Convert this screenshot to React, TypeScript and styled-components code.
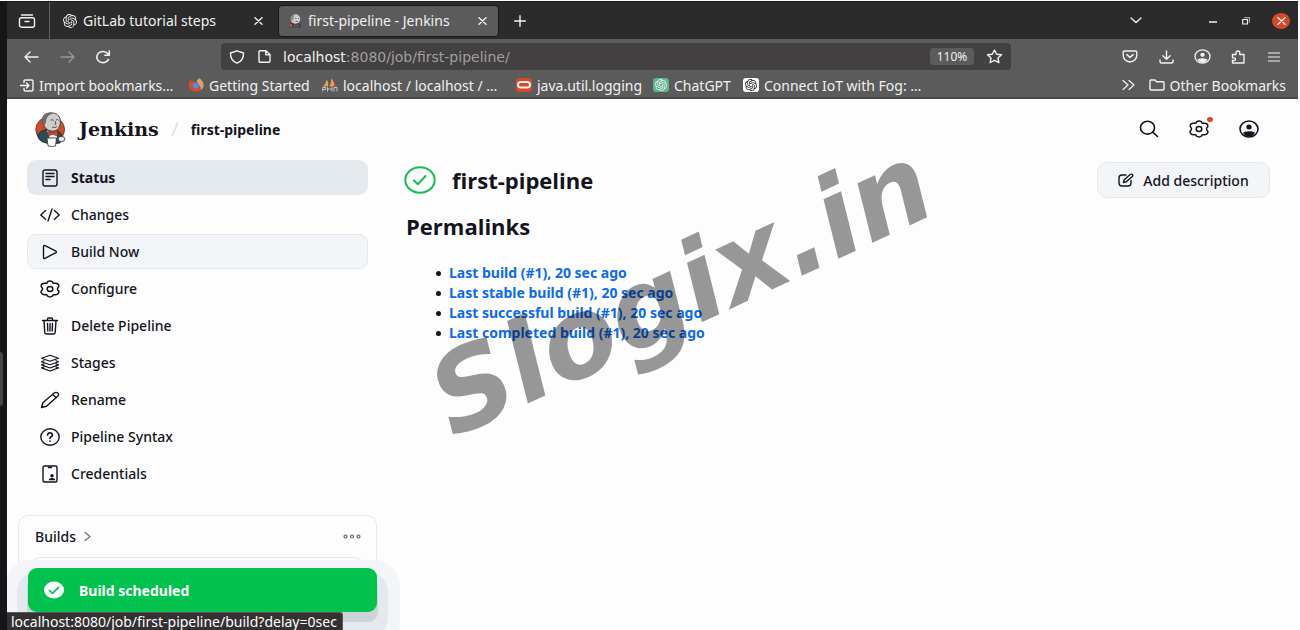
import React from "react";
import styled, { createGlobalStyle, css } from "styled-components";
import { SiOpenai } from "react-icons/si";

const Global = createGlobalStyle`
  * { box-sizing: border-box; }
  html, body { margin: 0; padding: 0; background: #fdfdfd; }
  body { font-family: "Noto Sans", "Open Sans", sans-serif; font-size: 14px; color: #14141f; overflow: hidden; }
  button, input { font: inherit; color: inherit; background: none; border: 0; padding: 0; margin: 0; }
  ul { list-style: none; margin: 0; padding: 0; }
  a { color: inherit; text-decoration: none; }
  svg { display: block; flex: none; }
`;

const Desktop = styled.div`
  display: flex;
  height: 100vh;
  padding: 1px 2px 0 0;
`;
const Dock = styled.div`
  width: 7px;
  flex: none;
  display: flex;
  align-items: center;
  background: #16151a;
`;
const DockHandle = styled.div`
  width: 3px;
  height: 54px;
  margin-top: 126px;
  border-radius: 0 3px 3px 0;
  background: #474649;
`;
const Window = styled.div`
  position: relative;
  flex: 1;
  min-width: 0;
  display: flex;
  flex-direction: column;
  overflow: hidden;
`;

const TabStrip = styled.header`
  display: flex;
  align-items: center;
  height: 38px;
  flex: none;
  background: #2b2b2b;
  border-top: 1px solid #1a1c1e;
  color: #f1f1f1;
`;
const ViewButton = styled.button`
  width: 43px;
  height: 100%;
  padding-right: 3px;
  display: grid;
  place-items: center;
  border-right: 1px solid #626262;
`;
const Tab = styled.div<{ $active?: boolean }>`
  display: flex;
  align-items: center;
  gap: 6px;
  height: 32px;
  width: ${(p) => (p.$active ? 221 : 228)}px;
  padding: 0 9px 0 ${(p) => (p.$active ? 9 : 13)}px;
  border-radius: 4px;
  ${(p) => p.$active && css`background: #5b5b5b; border: 1px solid #161719;`}
`;
const TabTitle = styled.span`
  flex: 1;
  white-space: nowrap;
`;
const IconButton = styled.button<{ $w?: number }>`
  width: ${(p) => p.$w ?? 36}px;
  height: 28px;
  flex: none;
  display: grid;
  place-items: center;
`;
const Spacer = styled.div`
  flex: 1;
`;
const CloseWindow = styled.button`
  width: 18px;
  height: 16px;
  margin: 0 8px 0 17px;
  border-radius: 50%;
  background: #d6482a;
  display: grid;
  place-items: center;
`;

const NavBar = styled.div`
  display: flex;
  align-items: center;
  height: 35px;
  flex: none;
  background: #5b5b5b;
  color: #f1f1f1;
`;
const NavLeft = styled.div`
  display: flex;
  width: 214px;
  padding-left: 6px;
  flex: none;
`;
const NavRight = styled.div`
  display: flex;
  justify-content: flex-end;
  width: 287px;
  padding-right: 6px;
  flex: none;
`;
const UrlBar = styled.div`
  flex: 1;
  min-width: 0;
  height: 27px;
  display: flex;
  align-items: center;
  padding: 0 8px;
  border-radius: 4px;
  background: #424040;
  font-family: "DejaVu Sans", sans-serif;
`;
const UrlHost = styled.label``;
const UrlPath = styled.input`
  flex: 1;
  min-width: 0;
  color: #a09f9f;
  outline: none;
`;
const Zoom = styled.button`
  width: 44px;
  height: 17px;
  margin-right: 11px;
  border-radius: 3px;
  background: #5b5b5b;
  font: 12px/17px "Noto Sans", sans-serif;
`;

const Bookmarks = styled.nav`
  display: flex;
  align-items: center;
  height: 25px;
  flex: none;
  padding: 0 12px 1px 13px;
  background: #5b5b5b;
  border-bottom: 2px solid #464646;
  color: #f1f1f1;
`;
const Bookmark = styled.a<{ $w?: number }>`
  display: flex;
  align-items: center;
  gap: 5px;
  width: ${(p) => (p.$w ? p.$w + "px" : "auto")};
  white-space: nowrap;
`;
const Favicon = styled.span<{ $bg: string }>`
  width: 16px;
  height: 14px;
  flex: none;
  border-radius: 3px;
  display: grid;
  place-items: center;
  background: ${(p) => p.$bg};
`;

const PageHeader = styled.header`
  display: flex;
  align-items: center;
  height: 60px;
  flex: none;
  padding: 0 24px 0 28px;
`;
const Brand = styled.a`
  display: flex;
  align-items: center;
  gap: 13px;
  font: bold 19px/24px "DejaVu Serif", serif;
`;
const Slash = styled.span`
  width: 32px;
  display: grid;
  place-items: center;
`;
const Crumb = styled.a`
  font-weight: 700;
`;
const HeaderAction = styled(IconButton)`
  position: relative;
  width: 50px;
`;
const Dot = styled.span`
  position: absolute;
  top: 2px;
  right: 11px;
  width: 6px;
  height: 5px;
  border-radius: 50%;
  background: #d6482a;
`;

const Body = styled.div`
  flex: 1;
  min-height: 0;
  display: flex;
`;
const Sidebar = styled.aside`
  width: 370px;
  flex: none;
  display: flex;
  flex-direction: column;
`;
const TaskList = styled.ul`
  display: flex;
  flex-direction: column;
  gap: 2px;
  padding: 1px 9px 0 20px;
`;
const Task = styled.a<{ $state?: "current" | "hover" }>`
  display: flex;
  align-items: center;
  gap: 11px;
  height: 35px;
  padding-left: 12px;
  border: 1px solid transparent;
  border-radius: 9px;
  font-weight: 500;
  ${(p) => p.$state === "current" && css`background: #e4e9ed; font-weight: 700;`}
  ${(p) => p.$state === "hover" && css`background: #f3f5f9; border-color: #e1e7ec;`}
`;
const BuildsCard = styled.section`
  flex: 1;
  display: flex;
  flex-direction: column;
  margin: 24px 0 0 11px;
  padding: 0 12px 0 11px;
  border: 1px solid #e4e9ed;
  border-bottom: 0;
  border-radius: 10px 10px 0 0;
`;
const BuildsHead = styled.div`
  display: flex;
  align-items: center;
  justify-content: space-between;
  height: 41px;
  padding: 0 4px 0 5px;
`;
const BuildsLink = styled.a`
  display: flex;
  align-items: center;
  gap: 8px;
  font-weight: 500;
`;
const BuildsInner = styled.div`
  flex: 1;
  border: 1px solid #e1e7ec;
  border-bottom: 0;
  border-radius: 10px 10px 0 0;
`;

const Main = styled.main`
  flex: 1;
  min-width: 0;
  padding: 3px 28px 0 27px;
`;
const TitleRow = styled.div`
  display: flex;
  align-items: center;
  justify-content: space-between;
`;
const Title = styled.h1`
  display: flex;
  align-items: center;
  gap: 16px;
  margin: 0;
  font: 700 22px/36px "Open Sans", sans-serif;
`;
const DescButton = styled.button`
  display: flex;
  align-items: center;
  justify-content: center;
  gap: 9px;
  width: 173px;
  height: 36px;
  border: 1px solid #e4e9ed;
  border-radius: 10px;
  background: #f3f5f9;
  font-weight: 500;
`;
const Subtitle = styled.h2`
  margin: 11px 0 0 2px;
  font: 700 22px/34px "Open Sans", sans-serif;
`;
const Links = styled.ul`
  margin-top: 20px;
  padding-left: 32px;
`;
const LinkItem = styled.li`
  display: flex;
  align-items: center;
  gap: 8px;
  line-height: 20px;
  font-weight: 700;
  color: #0b6aef;
  &::before {
    content: "";
    width: 5px;
    height: 5px;
    border-radius: 50%;
    background: #14141f;
  }
`;

const Watermark = styled.div`
  position: absolute;
  left: 457px;
  top: 333px;
  font: italic bold 110px/128px "DejaVu Sans", sans-serif;
  color: #000;
  opacity: 0.4;
  transform: rotate(-25deg);
  transform-origin: 0 100%;
  white-space: nowrap;
  pointer-events: none;
`;
const Toast = styled.div`
  position: absolute;
  left: 21px;
  bottom: 18px;
  width: 349px;
  height: 44px;
  display: flex;
  align-items: center;
  gap: 15px;
  padding-left: 16px;
  border-radius: 9px;
  background: #00c24d;
  color: #fff;
  font-weight: 700;
  box-shadow: 0 9px 0 1px #cdd4d8, 0 15px 0 11px #e4e9ed, 0 15px 0 23px #f3f5f9;
`;
const StatusBubble = styled.div`
  position: absolute;
  left: 0;
  bottom: 0;
  height: 18px;
  padding: 0 5px 0 4px;
  border: 1px solid #5a5a5a;
  border-width: 1px 1px 0 0;
  border-radius: 0 3px 0 0;
  background: #333132;
  color: #fff;
  line-height: 17px;
  white-space: nowrap;
`;

type IconProps = {
  w?: number;
  h?: number;
  box?: string;
  sw?: number;
  color?: string;
  children: React.ReactNode;
};
const Icon = ({ w = 20, h = 18, box = "0 0 20 18", sw = 1.4, color = "currentColor", children }: IconProps) => (
  <svg width={w} height={h} viewBox={box} fill="none" stroke={color} strokeWidth={sw} strokeLinecap="round" strokeLinejoin="round" aria-hidden="true">
    {children}
  </svg>
);
const CloseIcon = () => (
  <Icon w={9} h={8} box="0 0 9 8"><path d="M1 .7l7 6.6M8 .7L1 7.3" /></Icon>
);
const GearIcon = () => (
  <Icon w={20} h={18} sw={1.5}>
    <path d="M7.6 1.7Q10 .3 12.4 1.7L13.1 3.3L15.3 3.2Q18.2 3 18.8 5.4Q19.2 6.6 17.6 8L17.6 9.9Q19.4 11.4 18.8 12.6Q18 15 15.3 14.7L13.1 14.7L12.4 16.2Q10 17.6 7.6 16.2L6.9 14.7L4.7 14.7Q2 15 1.2 12.6Q.6 11.4 2.4 9.9L2.4 8Q.8 6.6 1.2 5.4Q1.8 3 4.7 3.2L6.9 3.3Z" />
    <ellipse cx="10" cy="9" rx="2.8" ry="2.5" />
  </Icon>
);
const UserIcon = ({ w = 20, h = 18 }: { w?: number; h?: number }) => (
  <Icon w={w} h={h} sw={1.6}>
    <ellipse cx="10" cy="9" rx="9" ry="8" />
    <ellipse cx="10" cy="7" rx="2.7" ry="2.5" fill="currentColor" stroke="none" />
    <path d="M4 12.4Q10 10 16 12.4Q14 16.5 10 16.5Q6 16.5 4 12.4Z" fill="currentColor" stroke="none" />
  </Icon>
);

const JenkinsLogo = ({ w = 31, h = 35 }: { w?: number; h?: number }) => (
  <svg width={w} height={h} viewBox="0 0 31 35" aria-hidden="true">
    <ellipse cx="15.2" cy="17.5" rx="14.4" ry="13" fill="#d24a2c" stroke="#5a2a20" strokeWidth=".8" />
    <path d="M7.5 9Q7 1.500 15 .8Q23 .4 25 6.500Q26.500 12 23.500 16.500Q20 20.500 14 18.500Q8.500 16 7.500 9Z" fill="#cfcecb" stroke="#2b2b2b" strokeWidth=".8" />
    <path d="M7.600 10.500Q5.500 3.500 12 1.300Q16 .2 18 1Q12 3.500 11.300 8Q11 12 9.500 13.500Q8 12.500 7.600 10.500Z" fill="#6d6d6d" />
    <path d="M15.500 8.200q2-1 3.300.2M21 8q1.500-.8 2.600.2M20 9l1 3-1.500.3M17 15q3 1.300 5-.4" stroke="#444" strokeWidth=".9" fill="none" />
    <path d="M2.500 23Q5 18.500 11 17.500L17 22L23 19Q27 21 27.500 26L25 31Q14 33 6.500 29.500Q3 27 2.500 23Z" fill="#2f4a50" stroke="#1d2426" strokeWidth=".8" />
    <path d="M12 18l5 4 4.500-3 .5 7-7 1z" fill="#efefef" />
    <path d="M13.500 19.500l4 1.800 5-2.500v5.200l-5-1.800-4 1.800z" fill="#d24a2c" stroke="#5e1c10" strokeWidth=".5" />
    <path d="M12 26h9.500l-1 8q-4 1-7.400 0z" fill="#fff" stroke="#333" strokeWidth=".8" />
    <ellipse cx="26.500" cy="27" rx="3.400" ry="2.600" fill="#eee" stroke="#333" strokeWidth=".8" />
  </svg>
);
const JenkinsFavicon = () => (
  <svg width="14" height="14" viewBox="0 0 14 14" aria-hidden="true">
    <path d="M1 10l2.500-1.500h7L13 10v3.500H1z" fill="#2f4a50" />
    <path d="M1 10.500l3-.5v3H2z" fill="#d24a2c" />
    <ellipse cx="7.500" cy="5" rx="4.800" ry="4.700" fill="#cfcfcf" />
    <path d="M3 6Q2.500 1.500 7 .4 5.500 3 5 7z" fill="#8b8b8b" />
    <path d="M7 4.500h1.500M10 4.500h1M7.500 7.500h2.500" stroke="#555" strokeWidth=".8" />
    <path d="M6 10.500l2 1 2-1v2l-2-.8-2 .8z" fill="#d24a2c" />
  </svg>
);

const tasks: { label: string; state?: "current" | "hover"; icon: React.ReactNode }[] = [
  { label: "Status", state: "current", icon: <Icon><rect x="3" y="1" width="14" height="16" rx="2" /><path d="M6 4.5h8M6 7.5h8M6 10.5h4" /></Icon> },
  { label: "Changes", icon: <Icon><path d="M5.5 4.5L.8 9l4.7 4.2M14.5 4.5L19.2 9l-4.7 4.2M12 3L8 15" /></Icon> },
  { label: "Build Now", state: "hover", icon: <Icon><path d="M3.5 3.6Q3.5 2 5 2.6L16 8.2Q17 9 16 9.6L5 15.3Q3.5 15.8 3.5 14.4Z" /></Icon> },
  { label: "Configure", icon: <GearIcon /> },
  { label: "Delete Pipeline", icon: <Icon><path d="M2.5 3.5h15M7.5 3.2V2q0-1 1-1h3q1 0 1 1v1.2M4 3.8l.8 11.6q.2 1.6 1.8 1.6h6.8q1.6 0 1.8-1.6L16 3.8M7.5 6.5l.3 7.5M10 6.5V14M12.5 6.5l-.3 7.5" /></Icon> },
  { label: "Stages", icon: <Icon><path d="M10 1.2l8.500 3L10 7.200 1.500 4.200zM4 6.700L1.500 7.700 10 10.800l8.500-3.100-2.500-1M4 9.900L1.500 10.900 10 14l8.500-3.100-2.500-1M4 13L1.500 13.900 10 17l8.500-3.100L16 13" strokeWidth="1.200" /></Icon> },
  { label: "Rename", icon: <Icon><path d="M1.500 16.500l1.300-4.700L14.500 1.800q1.600-1 3.200.2 1.600 1.400.2 3L6.500 15.300zM12.700 3.500l3.500 3.200" /></Icon> },
  { label: "Pipeline Syntax", icon: <Icon><ellipse cx="10" cy="9" rx="9.200" ry="8.200" /><path d="M7.600 7q.2-2.200 2.400-2.200T12.400 7q0 1.200-1.200 1.800T10 10.300M10 13v.1" strokeWidth="1.700" /></Icon> },
  { label: "Credentials", icon: <Icon><rect x="3" y="1" width="14" height="16" rx="1.500" /><path d="M8.500 2.500h3" /><circle cx="12" cy="10.800" r="1.700" fill="currentColor" stroke="none" /><path d="M8.700 15.200q.3-2.300 3.300-2.300t3.300 2.300z" fill="currentColor" stroke="none" /></Icon> },
];

const permalinks = [
  "Last build (#1), 20 sec ago",
  "Last stable build (#1), 20 sec ago",
  "Last successful build (#1), 20 sec ago",
  "Last completed build (#1), 20 sec ago",
];

export default function App() {
  return (
    <Desktop>
      <Global />
      <Dock><DockHandle /></Dock>
      <Window>
        <TabStrip>
          <ViewButton aria-label="Firefox View">
            <Icon w={18} h={14} box="0 0 18 14"><path d="M3.500 1h11" /><rect x="1.500" y="3.800" width="15" height="9.400" rx="2" /><path d="M7 7.500h4" /></Icon>
          </ViewButton>
          <Tab>
            <SiOpenai size={14} />
            <TabTitle>GitLab tutorial steps</TabTitle>
            <IconButton $w={22} aria-label="Close tab"><CloseIcon /></IconButton>
          </Tab>
          <Tab $active>
            <JenkinsFavicon />
            <TabTitle>first-pipeline - Jenkins</TabTitle>
            <IconButton $w={14} aria-label="Close tab"><CloseIcon /></IconButton>
          </Tab>
          <IconButton $w={42} aria-label="New tab"><Icon w={12} h={12} box="0 0 12 12"><path d="M6 .7v10.600M.7 6h10.600" /></Icon></IconButton>
          <Spacer />
          <IconButton $w={106} aria-label="List all tabs"><Icon w={12} h={7} box="0 0 12 7"><path d="M1 1l5 4.500L11 1" /></Icon></IconButton>
          <IconButton $w={48} aria-label="Minimize"><Icon w={8} h={5} box="0 0 8 5"><path d="M0 4h8" /></Icon></IconButton>
          <IconButton $w={18} aria-label="Restore"><Icon w={8} h={8} box="0 0 8 8" sw={1.200}><rect x=".7" y="2.500" width="4.800" height="4.500" /><path d="M2.500.7h5v4.500" opacity=".6" /></Icon></IconButton>
          <CloseWindow aria-label="Close window"><CloseIcon /></CloseWindow>
        </TabStrip>

        <NavBar>
          <NavLeft>
            <IconButton aria-label="Back"><Icon w={15} h={12} box="0 0 15 12"><path d="M14 6H1M6 1L1 6l5 5" /></Icon></IconButton>
            <IconButton aria-label="Forward"><Icon w={15} h={12} box="0 0 15 12" color="#979797"><path d="M1 6h13M9 1l5 5-5 5" /></Icon></IconButton>
            <IconButton aria-label="Reload"><Icon w={16} h={14} box="0 0 16 14" sw={1.600}><path d="M13.500 9.500A6.200 5.600 0 1 1 12.800 3.600L14 5M14.300 1v4.200H9.800" /></Icon></IconButton>
          </NavLeft>
          <UrlBar>
            <IconButton $w={16} aria-label="Tracking protection"><Icon w={16} h={14} box="0 0 16 14"><path d="M8 .8l6.500 2.200q.3 7.500-6.500 10.200Q1.200 10.500 1.500 3z" /></Icon></IconButton>
            <IconButton $w={38} aria-label="Site information"><Icon w={13} h={13} box="0 0 13 13"><path d="M1 2q0-1.200 1.200-1.200H8L12 4.500V11q0 1.200-1.200 1.200H2.200Q1 12.200 1 11zM7.800 1v3.700H12" /></Icon></IconButton>
            <UrlHost htmlFor="address">localhost</UrlHost>
            <UrlPath id="address" defaultValue=":8080/job/first-pipeline/" />
            <Zoom>110%</Zoom>
            <IconButton $w={18} aria-label="Bookmark this page"><Icon w={17} h={15} box="0 0 17 15"><path d="M8.500 1l2.200 4.200 4.800.6-3.500 3.200.9 4.600-4.400-2.200-4.400 2.200.9-4.600L1.500 5.800l4.800-.6z" /></Icon></IconButton>
          </UrlBar>
          <NavRight>
            <IconButton aria-label="Pocket"><Icon w={16} h={13} box="0 0 16 13"><path d="M2.500 1h11q1.300 0 1.300 1.200V5q0 6-6.800 7Q1.200 11 1.200 5V2.200Q1.200 1 2.500 1zM4.800 4.600L8 7.400l3.200-2.800" /></Icon></IconButton>
            <IconButton aria-label="Downloads"><Icon w={15} h={14} box="0 0 15 14"><path d="M7.500 1v8M3.800 5.700L7.500 9.200l3.700-3.500M1 10v1.500Q1 13 2.500 13h10q1.500 0 1.500-1.500V10" /></Icon></IconButton>
            <IconButton aria-label="Account"><UserIcon w={17} h={15} /></IconButton>
            <IconButton aria-label="Extensions"><Icon w={15} h={14} box="0 0 15 14"><path d="M1.500 4.500H5V3q0-2 1.900-2t1.900 2v1.500H13V13H1.500v-2.500H3q1.500 0 1.500-1.300T3 7.900H1.500z" /></Icon></IconButton>
            <IconButton aria-label="Menu"><Icon w={12} h={10} box="0 0 12 10" sw={1.200}><path d="M.5 1h11M.5 5h11M.5 9h11" /></Icon></IconButton>
          </NavRight>
        </NavBar>

        <Bookmarks>
          <Bookmark href="#" $w={168}><Icon w={14} h={13} box="0 0 14 13"><path d="M4 3.500V2.200Q4 1 5.200 1h6.600Q13 1 13 2.200v8.600q0 1.200-1.200 1.200H5.200Q4 12 4 10.800V9.500M0 6.500h9M6.500 4L9 6.500 6.500 9" /></Icon>Import bookmarks…</Bookmark>
          <Bookmark href="#" $w={134}>
            <svg width="16" height="14" viewBox="0 0 16 14" aria-hidden="true">
              <path d="M.5 5.500Q1.500 2.500 3 2l1 1.200L7 3q-1 2 .5 3.500L12 9.500l1.500 2Q10.500 14 7 13.600.5 12.500.5 5.500z" fill="#d9482b" />
              <path d="M8.500 3Q9.500 1 11.500.3 15.500 3 15.600 7.500 15.500 10.500 13.200 12 13 9 10.800 6.500z" fill="#e2a05c" />
              <path d="M5 5.500Q7.500 3.500 10 5.500q2 2 .3 4.200-2.300 1.800-4.500.2Q4.300 8 5 5.500z" fill="#4a90e8" />
            </svg>
            Getting Started
          </Bookmark>
          <Bookmark href="#" $w={194}>
            <svg width="16" height="14" viewBox="0 0 16 14" aria-hidden="true">
              <path d="M.5 8.500Q4 6 4.500 1.500q2.500 3 1.500 7zM7 8.500q2.500-3 2-8Q13 4 12 8.500z" fill="#e2a05c" />
              <path d="M12 4l3.500 4.500H12z" fill="#d9482b" />
              <path d="M.7 13.500v-4h3v2h-3M5.500 13.500v-4l2.200 2.500 2.300-2.500v4M12 13.500v-4h3v4" fill="none" stroke="#c4c4c4" />
            </svg>
            localhost / localhost / …
          </Bookmark>
          <Bookmark href="#" $w={137}><Favicon $bg="#d6482a"><Icon w={14} h={8} box="0 0 14 8" sw={2}><rect x="1" y="1" width="12" height="5.500" rx="2.700" /></Icon></Favicon>java.util.logging</Bookmark>
          <Bookmark href="#" $w={90}><Favicon $bg="#5fb592"><SiOpenai size={12} /></Favicon>ChatGPT</Bookmark>
          <Bookmark href="#"><Favicon $bg="#fff"><SiOpenai size={12} color="#222" /></Favicon>Connect IoT with Fog: …</Bookmark>
          <Spacer />
          <IconButton $w={40} aria-label="More bookmarks"><Icon w={13} h={10} box="0 0 13 10" sw={1.200}><path d="M1 .5L6 5 1 9.500M7 .5L12 5 7 9.500" /></Icon></IconButton>
          <Bookmark href="#"><Icon w={16} h={12} box="0 0 16 12"><path d="M1 10V2q0-1 1-1h4l1.500 1.700H14q1 0 1 1V10q0 1-1 1H2q-1 0-1-1z" /></Icon>Other Bookmarks</Bookmark>
        </Bookmarks>

        <PageHeader>
          <Brand href="#"><JenkinsLogo />Jenkins</Brand>
          <Slash><Icon w={8} h={14} box="0 0 8 14" color="#dfe5ea" sw={2}><path d="M6.500 1l-5 12" /></Icon></Slash>
          <Crumb href="#">first-pipeline</Crumb>
          <Spacer />
          <HeaderAction aria-label="Search"><Icon w={20} h={18} sw={1.600}><ellipse cx="8.500" cy="7.700" rx="7" ry="6.400" /><path d="M13.700 12.200L18.500 16.500" /></Icon></HeaderAction>
          <HeaderAction aria-label="Manage Jenkins"><GearIcon /><Dot /></HeaderAction>
          <HeaderAction aria-label="Account"><UserIcon /></HeaderAction>
        </PageHeader>

        <Body>
          <Sidebar>
            <TaskList>
              {tasks.map((t) => (
                <li key={t.label}><Task href="#" $state={t.state}>{t.icon}{t.label}</Task></li>
              ))}
            </TaskList>
            <BuildsCard>
              <BuildsHead>
                <BuildsLink href="#">Builds<Icon w={7} h={9} box="0 0 7 9" color="#777"><path d="M1 .5l5 4-5 4" /></Icon></BuildsLink>
                <IconButton $w={17} aria-label="More actions"><Icon w={18} h={5} box="0 0 18 5" color="#666" sw={1.200}><circle cx="2.500" cy="2.500" r="1.500" /><circle cx="9" cy="2.500" r="1.500" /><circle cx="15.500" cy="2.500" r="1.500" /></Icon></IconButton>
              </BuildsHead>
              <BuildsInner />
            </BuildsCard>
          </Sidebar>
          <Main>
            <TitleRow>
              <Title>
                <Icon w={32} h={28} box="0 0 32 28" color="#0cc04f" sw={2}><ellipse cx="16" cy="14" rx="14.700" ry="12.700" /><path d="M10 14.500l4 3.700L21.500 10" /></Icon>
                first-pipeline
              </Title>
              <DescButton><Icon w={16} h={14} box="0 0 16 14"><path d="M8 2H4Q1 2 1 5v5q0 3 3 3h6q3 0 3-3V7.500M5.500 9.500l.7-2.700 6-5.300q1.300-.8 2.200 0 .9 1-.1 2L8.300 8.800z" /></Icon>Add description</DescButton>
            </TitleRow>
            <Subtitle>Permalinks</Subtitle>
            <Links>
              {permalinks.map((p) => (<LinkItem key={p}><a href="#">{p}</a></LinkItem>))}
            </Links>
          </Main>
        </Body>

        <Watermark>Slogix.in</Watermark>
        <Toast role="status">
          <svg width="20" height="18" viewBox="0 0 20 18" fill="none" aria-hidden="true"><ellipse cx="10" cy="9" rx="10" ry="8.500" fill="#fff" /><path d="M5.500 9.500l3 2.800 6-6" stroke="#00c24d" strokeWidth="1.700" strokeLinecap="round" /></svg>
          Build scheduled
        </Toast>
        <StatusBubble>localhost:8080/job/first-pipeline/build?delay=0sec</StatusBubble>
      </Window>
    </Desktop>
  );
}
